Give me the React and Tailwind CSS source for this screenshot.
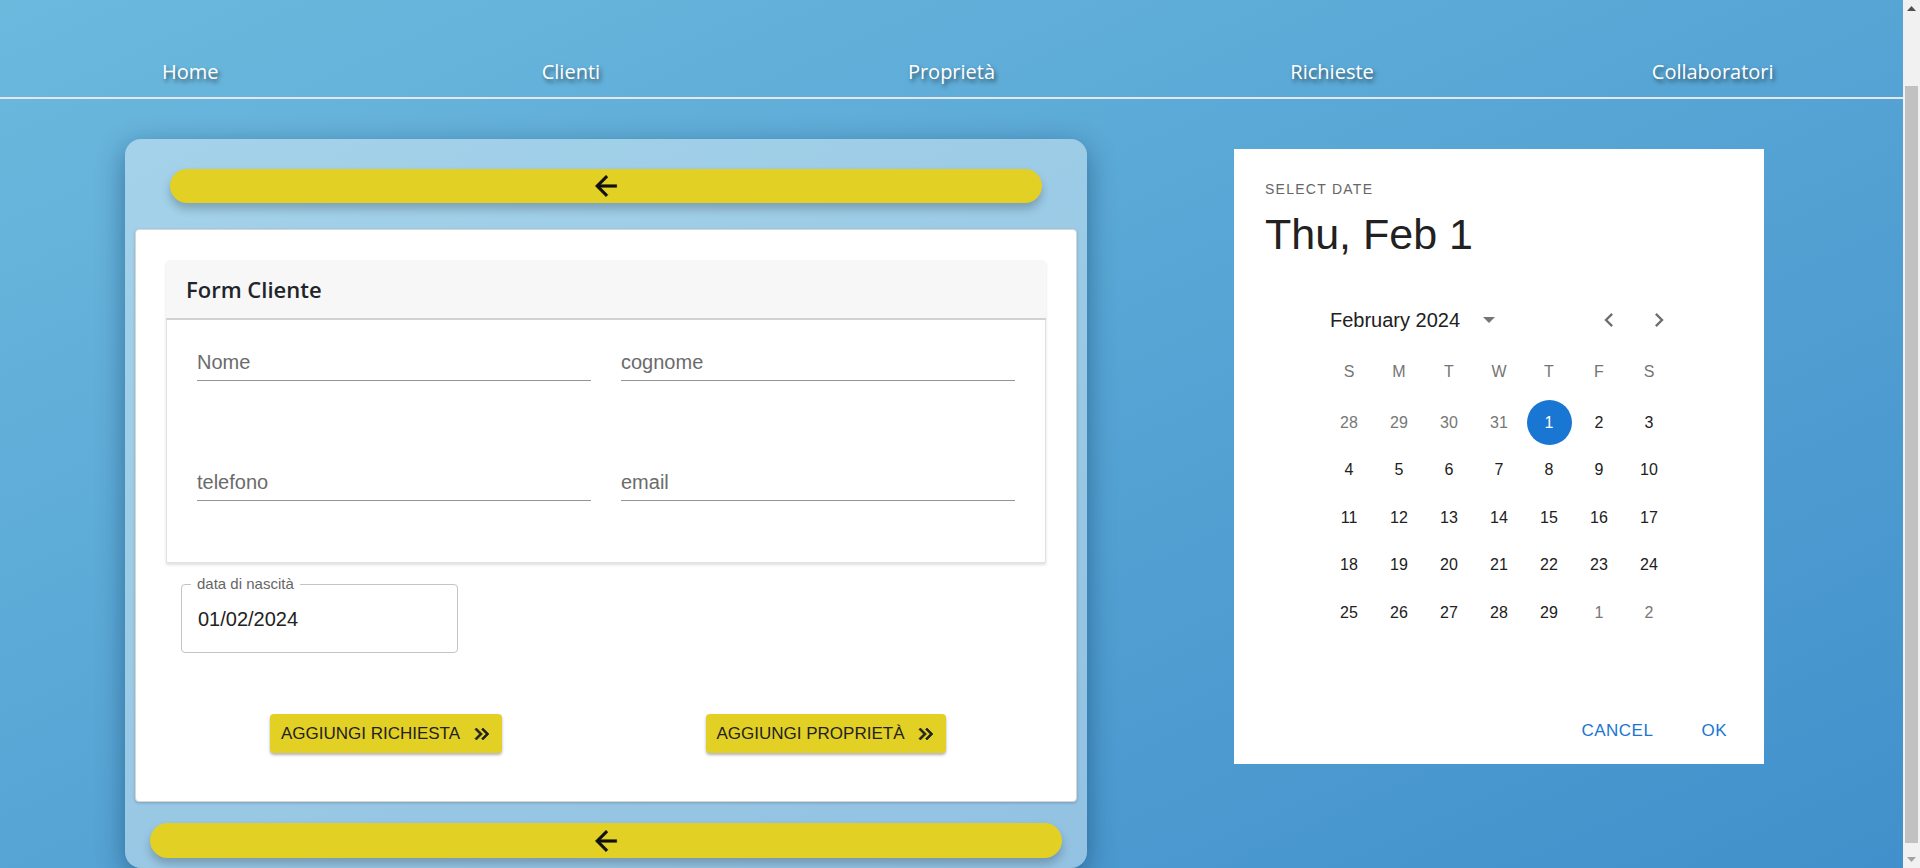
import { useLayoutEffect, useRef } from 'react'

const NAV = ['Home', 'Clienti', 'Proprietà', 'Richieste', 'Collaboratori']

const WEEKDAYS = ['S', 'M', 'T', 'W', 'T', 'F', 'S']

const WEEKS = [
  [[28, 0], [29, 0], [30, 0], [31, 0], [1, 2], [2, 1], [3, 1]],
  [[4, 1], [5, 1], [6, 1], [7, 1], [8, 1], [9, 1], [10, 1]],
  [[11, 1], [12, 1], [13, 1], [14, 1], [15, 1], [16, 1], [17, 1]],
  [[18, 1], [19, 1], [20, 1], [21, 1], [22, 1], [23, 1], [24, 1]],
  [[25, 1], [26, 1], [27, 1], [28, 1], [29, 1], [1, 0], [2, 0]],
]

function ArrowBack() {
  return (
    <svg width="32" height="32" viewBox="0 0 24 24" fill="#111" stroke="#111" strokeWidth="0.4">
      <path d="M20 11H7.83l5.59-5.59L12 4l-8 8 8 8 1.41-1.41L7.83 13H20v-2z" />
    </svg>
  )
}

function DoubleArrow() {
  return (
    <svg width="24" height="24" viewBox="0 0 24 24" fill="#222" stroke="#222" strokeWidth="0.7">
      <path d="M6.41 6 5 7.41 9.58 12 5 16.59 6.41 18l6-6z" />
      <path d="M13 6l-1.41 1.41L16.17 12l-4.58 4.59L13 18l6-6z" />
    </svg>
  )
}

function Field({ label }) {
  return (
    <div className="h-[40px] border-b border-[#949494] flex items-end pb-[6px]">
      <span className="text-[20px] leading-[24px] text-[#6b6b6b]">{label}</span>
    </div>
  )
}

function YellowBar({ className }) {
  return (
    <button
      className={`flex items-center justify-center rounded-full bg-[#e2d024] shadow-[0_6px_10px_rgba(0,0,0,0.22)] ${className}`}
    >
      <ArrowBack />
    </button>
  )
}

function ActionButton({ label }) {
  return (
    <button className="h-[39px] flex items-center pl-[11px] pr-[8px] rounded-[4px] bg-[#e2d024] shadow-[0_2px_3px_rgba(0,0,0,0.3)]">
      <span className="text-[17px] text-[#222] uppercase">{label}</span>
      <span className="ml-[10px] flex">
        <DoubleArrow />
      </span>
    </button>
  )
}

function ClientCard() {
  return (
    <div className="w-[962px] rounded-[16px] bg-white/40 shadow-[0_8px_28px_rgba(0,40,80,0.45)] pt-[30px] pb-[10px]">
      <YellowBar className="mx-[45px] w-[872px] h-[34px]" />

      {/* Form panel */}
      <div className="mt-[26px] mx-[10px] h-[573px] bg-white rounded-[4px] border border-[#d6d6d6] shadow-[0_1px_3px_rgba(0,0,0,0.2)] px-[30px] pt-[30px]">
        <div className="rounded-t-[4px] shadow-[0_2px_3px_rgba(0,0,0,0.12)]">
          <div className="h-[60px] bg-[#f7f7f7] border-b-2 border-[#d2d2d2] rounded-t-[4px] flex items-center pl-[20px]">
            <h2 className="font-['Open_Sans',sans-serif] text-[22px] font-semibold text-[#212529]">Form Cliente</h2>
          </div>
          <div className="border-x border-b border-[#e2e2e2] px-[30px] pt-[21px] pb-[61px] grid grid-cols-2 gap-x-[30px] gap-y-[80px]">
            <Field label="Nome" />
            <Field label="cognome" />
            <Field label="telefono" />
            <Field label="email" />
          </div>
        </div>

        {/* Date of birth */}
        <div className="mt-[21px] ml-[15px] w-[277px] h-[69px] relative rounded-[4px] border border-[#c4c4c4] flex items-center pl-[16px]">
          <span className="absolute -top-[10px] left-[9px] bg-white px-[6px] text-[15px] leading-[18px] text-[#666]">
            data di nascità
          </span>
          <span className="text-[20px] text-[#222]">01/02/2024</span>
        </div>

        <div className="mt-[61px] grid grid-cols-2">
          <div className="flex justify-center">
            <ActionButton label="Aggiungi richiesta" />
          </div>
          <div className="flex justify-center">
            <ActionButton label="Aggiungi proprietà" />
          </div>
        </div>
      </div>

      <YellowBar className="mt-[21px] mx-[25px] w-[912px] h-[35px]" />
    </div>
  )
}

function Chevron({ dir }) {
  return (
    <svg width="28" height="28" viewBox="0 0 24 24" fill="#6f6f6f">
      {dir === 'left' ? (
        <path d="M15.41 7.41 14 6l-6 6 6 6 1.41-1.41L10.83 12z" />
      ) : (
        <path d="M8.59 16.59 10 18l6-6-6-6-1.41 1.41L13.17 12z" />
      )}
    </svg>
  )
}

function DatePicker() {
  return (
    <div className="mt-[10px] ml-[147px] w-[530px] h-[615px] bg-white flex flex-col">
      <div className="pl-[31px] pt-[32px]">
        <p className="text-[14px] leading-[16px] tracking-[0.09em] text-[#666]">SELECT DATE</p>
        <p className="mt-[12px] text-[43px] leading-[50px] text-[#212121]">Thu, Feb 1</p>
      </div>

      {/* Month header */}
      <div className="mt-[41px] w-[350px] mx-auto h-[40px] flex items-center">
        <span className="pl-[6px] text-[20px] text-[#212121]">February 2024</span>
        <svg className="ml-[22px]" width="14" height="8" viewBox="0 0 14 8" fill="#757575">
          <path d="M1 1l6 6 6-6z" />
        </svg>
        <div className="flex-1" />
        <div className="flex gap-[14px] -mr-[3px]">
          <span className="w-[36px] h-[36px] flex items-center justify-center">
            <Chevron dir="left" />
          </span>
          <span className="w-[36px] h-[36px] flex items-center justify-center">
            <Chevron dir="right" />
          </span>
        </div>
      </div>

      {/* Weekdays */}
      <div className="mt-[12px] w-[350px] mx-auto grid grid-cols-7 h-[40px] mb-[7px]">
        {WEEKDAYS.map((d, i) => (
          <span key={i} className="flex items-center justify-center text-[16px] text-[#757575]">
            {d}
          </span>
        ))}
      </div>

      {/* Days */}
      <div className="w-[350px] mx-auto">
        {WEEKS.map((week, w) => (
          <div key={w} className="grid grid-cols-7 h-[47.5px]">
            {week.map(([n, kind], i) => (
              <div key={i} className="flex items-center justify-center">
                {kind === 2 ? (
                  <span className="w-[45px] h-[45px] rounded-full bg-[#1976d2] text-white text-[16px] font-medium flex items-center justify-center">
                    {n}
                  </span>
                ) : (
                  <span className={`text-[16px] ${kind === 0 ? 'text-[#777]' : 'text-[#212121]'}`}>{n}</span>
                )}
              </div>
            ))}
          </div>
        ))}
      </div>

      {/* Actions */}
      <div className="mt-auto pb-[15px] pr-[29px] flex justify-end gap-[32px]">
        <button className="h-[36px] px-[8px] text-[17px] tracking-[0.03em] text-[#1976d2]">CANCEL</button>
        <button className="h-[36px] px-[8px] text-[17px] tracking-[0.03em] text-[#1976d2]">OK</button>
      </div>
    </div>
  )
}

function ScrollRail() {
  return (
    <div className="w-[17px] h-screen bg-[#f1f1f1] flex flex-col items-center shrink-0">
      <div className="h-[17px] flex items-center justify-center">
        <svg width="9" height="5" viewBox="0 0 9 5" fill="#505050">
          <path d="M0 5 4.5 0 9 5z" />
        </svg>
      </div>
      <div className="mt-[69px] w-[13px] h-[757px] bg-[#c1c1c1]" />
      <div className="flex-1" />
      <div className="h-[17px] flex items-center justify-center">
        <svg width="9" height="5" viewBox="0 0 9 5" fill="#a3a3a3">
          <path d="M0 0h9L4.5 5z" />
        </svg>
      </div>
    </div>
  )
}

export default function App() {
  const scroller = useRef(null)

  useLayoutEffect(() => {
    if (scroller.current) scroller.current.scrollTop = 80
  }, [])

  return (
    <div className="h-screen flex bg-[linear-gradient(to_bottom_right,#6cb9de,#4190cb)] font-['Liberation_Sans',Arial,sans-serif]">
      <div ref={scroller} className="flex-1 h-screen overflow-y-auto [scrollbar-width:none]">
        <div className="pt-[80px] pb-[8px]">
          {/* Nav */}
          <nav className="h-[99px] border-b-2 border-[#e4e8ec] flex">
            {NAV.map((item) => (
              <a
                key={item}
                className="flex-1 text-center pt-[59px] leading-[26px] text-[20px] text-white font-['Open_Sans',sans-serif] [text-shadow:2px_3px_4px_rgba(0,0,0,0.55)]"
              >
                {item}
              </a>
            ))}
          </nav>

          <main className="pt-[40px] pl-[125px] flex items-start">
            <ClientCard />
            <DatePicker />
          </main>
        </div>
      </div>
      <ScrollRail />
    </div>
  )
}
